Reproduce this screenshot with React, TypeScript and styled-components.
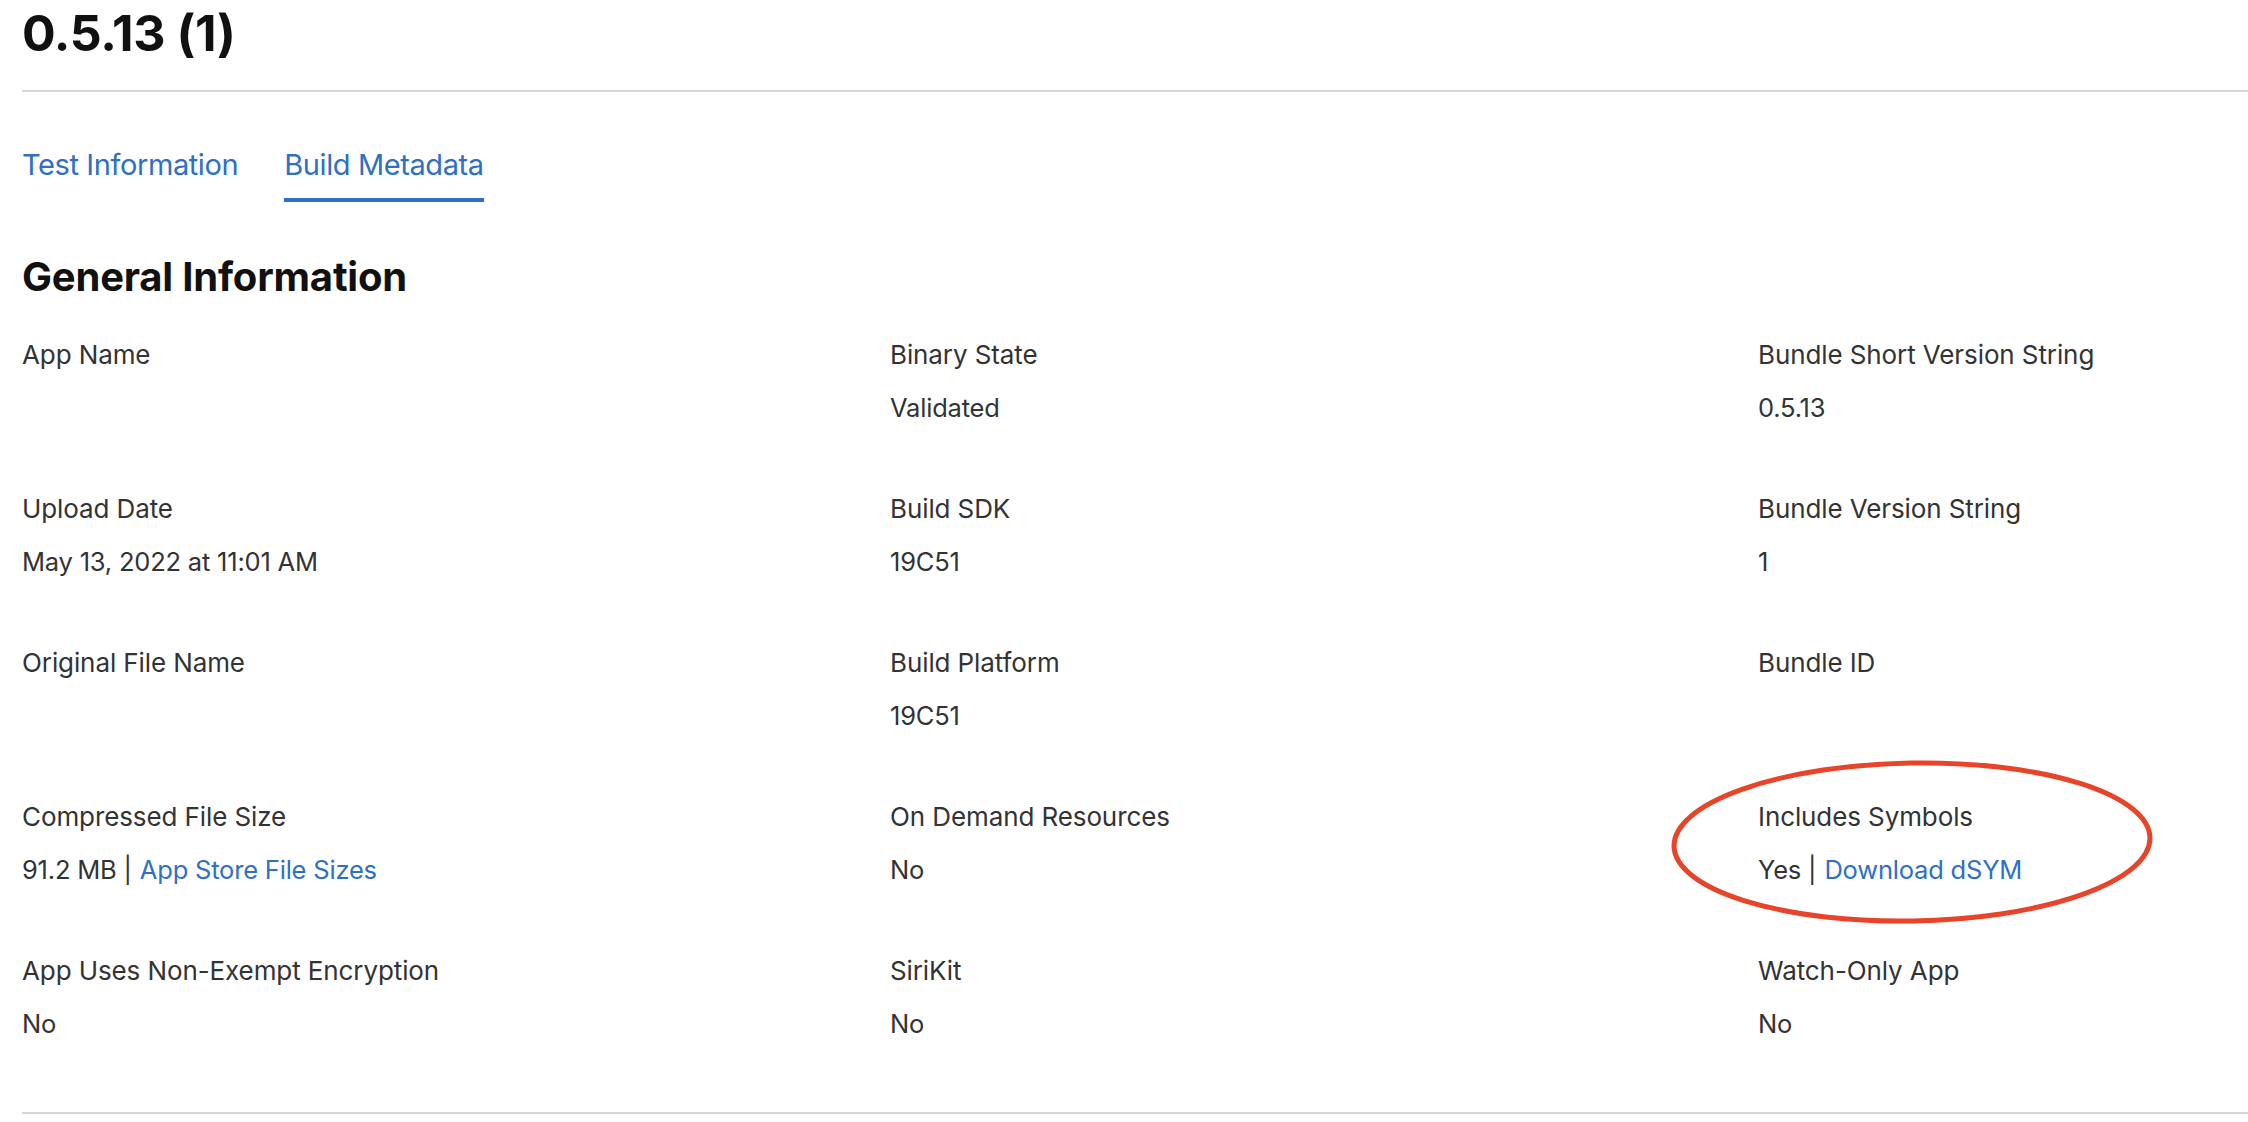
import React from "react";
import styled, { createGlobalStyle } from "styled-components";

const GlobalStyle = createGlobalStyle`
	html, body {
		margin: 0;
		padding: 0;
		background: #ffffff;
		font-family: Inter, "Noto Sans", "Liberation Sans", sans-serif;
		-webkit-font-smoothing: antialiased;
	}
`;

const Page = styled.div`
	padding: 4px 0 0 22px;
	overflow: hidden;
`;

const Title = styled.h1`
	margin: 0 0 28px;
	font-size: 50px;
	line-height: 58px;
	font-weight: 700;
	color: #111111;
	letter-spacing: -0.4px;
`;

const Divider = styled.hr`
	margin: 0;
	border: 0;
	height: 2px;
	background: #d6d6d6;
`;

const Tabs = styled.nav`
	display: flex;
	gap: 46px;
	margin-top: 55px;
`;

const Tab = styled.a<{ $active?: boolean }>`
	display: block;
	padding-bottom: 15px;
	border-bottom: 4px solid ${(p) => (p.$active ? "#2f6fc6" : "transparent")};
	font-size: 29px;
	line-height: 36px;
	letter-spacing: -0.4px;
	color: #2f6fc6;
	text-decoration: none;
	cursor: pointer;
`;

const SectionTitle = styled.h2`
	margin: 50px 0 38px;
	font-size: 40px;
	line-height: 50px;
	font-weight: 700;
	color: #111111;
	letter-spacing: -0.2px;
`;

const Grid = styled.dl`
	display: grid;
	grid-template-columns: repeat(3, 868px);
	row-gap: 71px;
	margin: 0;
`;

const Field = styled.div`
	position: relative;
	display: flex;
	flex-direction: column;
	gap: 23px;
`;

const Label = styled.dt`
	font-size: 26px;
	line-height: 30px;
	letter-spacing: -0.1px;
	color: #333333;
	white-space: nowrap;
`;

const Value = styled.dd`
	margin: 0;
	min-height: 30px;
	font-size: 25.5px;
	line-height: 30px;
	letter-spacing: -0.2px;
	color: #333333;
	white-space: nowrap;
`;

const Separator = styled.span`
	margin: 0 8px 0 7px;
`;

const TextLink = styled.a`
	color: #2f6fc6;
	text-decoration: none;
	cursor: pointer;
`;

const BottomRule = styled(Divider)`
	margin-top: 73px;
`;

const Highlight = styled.svg`
	position: absolute;
	left: -88px;
	top: -42px;
	width: 484px;
	height: 164px;
	overflow: visible;
	pointer-events: none;
`;

type Item = { label: string; value?: string; link?: string; circled?: boolean };

const fields: Item[] = [
	{ label: "App Name" },
	{ label: "Binary State", value: "Validated" },
	{ label: "Bundle Short Version String", value: "0.5.13" },
	{ label: "Upload Date", value: "May 13, 2022 at 11:01 AM" },
	{ label: "Build SDK", value: "19C51" },
	{ label: "Bundle Version String", value: "1" },
	{ label: "Original File Name" },
	{ label: "Build Platform", value: "19C51" },
	{ label: "Bundle ID" },
	{ label: "Compressed File Size", value: "91.2 MB", link: "App Store File Sizes" },
	{ label: "On Demand Resources", value: "No" },
	{ label: "Includes Symbols", value: "Yes", link: "Download dSYM", circled: true },
	{ label: "App Uses Non-Exempt Encryption", value: "No" },
	{ label: "SiriKit", value: "No" },
	{ label: "Watch-Only App", value: "No" },
];

const App = (): JSX.Element => {
	return (
		<Page>
			<GlobalStyle />
			<Title>0.5.13 (1)</Title>
			<Divider />
			<Tabs>
				<Tab>Test Information</Tab>
				<Tab $active>Build Metadata</Tab>
			</Tabs>
			<SectionTitle>General Information</SectionTitle>
			<Grid>
				{fields.map((f) => (
					<Field key={f.label}>
						<Label>{f.label}</Label>
						<Value>
							{f.value}
							{f.link && (
								<>
									<Separator>|</Separator>
									<TextLink>{f.link}</TextLink>
								</>
							)}
						</Value>
						{f.circled && (
							<Highlight viewBox="0 0 484 164">
								<ellipse
									cx="242"
									cy="82"
									rx="238"
									ry="79"
									fill="none"
									stroke="#e8442a"
									strokeWidth="5"
									transform="rotate(-1 242 82)"
								/>
							</Highlight>
						)}
					</Field>
				))}
			</Grid>
			<BottomRule />
		</Page>
	);
};

export default App;
